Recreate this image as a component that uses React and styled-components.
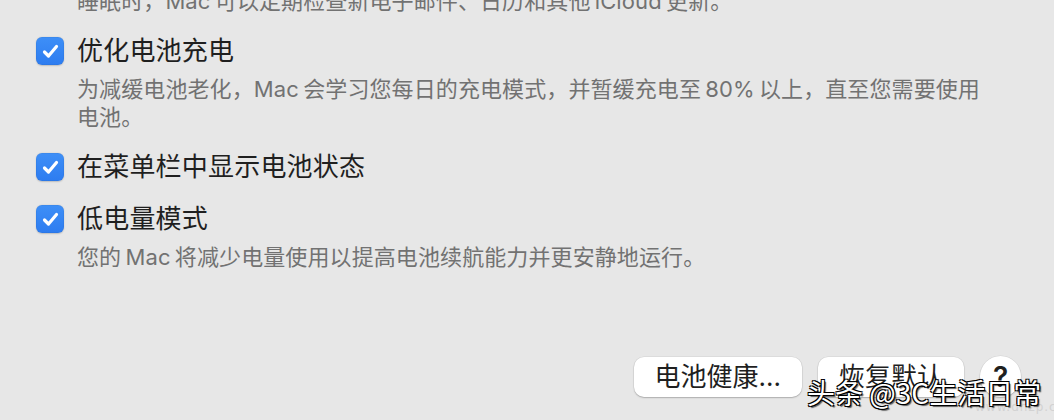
import React from "react";
import styled, { createGlobalStyle } from "styled-components";

const Global = createGlobalStyle`
  html, body { margin: 0; padding: 0; background: #e7e7e7; }
  body { font-family: "Inter", "Noto Sans CJK SC", sans-serif; -webkit-font-smoothing: antialiased; }
`;

const Page = styled.div`
  position: relative;
  width: 1054px;
  height: 420px;
  overflow: hidden;
  background: #e7e7e7;
  display: flex;
  flex-direction: column;
`;

const List = styled.div`
  display: flex;
  flex-direction: column;
  gap: 20px;
  padding-left: 36px;
  margin-top: -13px;
`;

const Row = styled.div`
  display: grid;
  grid-template-columns: 27px 1fr;
  column-gap: 14px;
  align-items: start;
`;

const Box = styled.span`
  width: 28px;
  height: 28px;
  margin-top: 2px;
  border-radius: 6px;
  background: linear-gradient(#3e8ff7, #2d7cf0);
  box-shadow: 0 0.5px 1.5px rgba(0, 0, 0, 0.18), inset 0 0 0 0.5px rgba(0, 0, 0, 0.08);
  display: flex;
  align-items: center;
  justify-content: center;
`;

const Texts = styled.div`
  grid-column: 2;
  display: flex;
  flex-direction: column;
  gap: 8px;
`;

const Title = styled.div`
  font-size: 26px;
  line-height: 32px;
  color: #1f1f1f;
  letter-spacing: 0.2px;
`;

const Desc = styled.div`
  font-size: 22px;
  line-height: 28px;
  color: #727272;
  white-space: nowrap;
  letter-spacing: 0.1px;
  word-spacing: -2px;
`;

const Spacer = styled.div`
  flex: 1;
`;

const Footer = styled.div`
  display: flex;
  justify-content: flex-end;
  align-items: center;
  gap: 16px;
  padding: 0 33px 23px 0;
`;

const Button = styled.button`
  height: 40px;
  padding: 0 21px;
  border: none;
  border-radius: 10px;
  background: #ffffff;
  box-shadow: 0 1px 1.5px rgba(0, 0, 0, 0.22), 0 0 0 0.5px rgba(0, 0, 0, 0.08);
  font-family: "Inter", "Noto Sans CJK SC", sans-serif;
  font-size: 26px;
  line-height: 40px;
  color: #1f1f1f;
`;

const Help = styled(Button)`
  width: 41px;
  height: 41px;
  padding: 0;
  border-radius: 50%;
  font-weight: 600;
  font-size: 28px;
`;

const Watermark = styled.div`
  position: absolute;
  left: 807px;
  top: 374px;
  font-family: "Noto Sans CJK SC", sans-serif;
  font-size: 28px;
  line-height: 36px;
  color: #ffffff;
  white-space: nowrap;
  text-shadow: 1px 1px 0 #000, -1px -1px 0 #000, 1px -1px 0 #000, -1px 1px 0 #000, 2px 2px 1px rgba(0,0,0,0.6);
`;

const SiteMark = styled.div`
  position: absolute;
  left: 975px;
  top: 400px;
  font-family: "DejaVu Sans", sans-serif;
  font-size: 12px;
  letter-spacing: 1px;
  color: #d2d2d2;
`;

const Check = () => (
  <svg width="19" height="19" viewBox="0 0 19 19">
    <path d="M3.5 10 L7.5 14 L15.5 4.5" fill="none" stroke="#fff" strokeWidth="3.2" strokeLinecap="round" strokeLinejoin="round" />
  </svg>
);

const Option = ({ title, lines }) => (
  <Row>
    <Box><Check /></Box>
    <Texts>
      <Title>{title}</Title>
      {lines && (
        <div>
          {lines.map((l, i) => (
            <Desc key={i}>{l}</Desc>
          ))}
        </div>
      )}
    </Texts>
  </Row>
);

export default function App() {
  return (
    <Page>
      <Global />
      <List>
        <Row>
          <Texts>
            <Desc>睡眠时，Mac 可以定期检查新电子邮件、日历和其他 iCloud 更新。</Desc>
          </Texts>
        </Row>
        <Option
          title="优化电池充电"
          lines={[
            "为减缓电池老化，Mac 会学习您每日的充电模式，并暂缓充电至 80% 以上，直至您需要使用",
            "电池。",
          ]}
        />
        <Option title="在菜单栏中显示电池状态" />
        <Option title="低电量模式" lines={["您的 Mac 将减少电量使用以提高电池续航能力并更安静地运行。"]} />
      </List>
      <Spacer />
      <Footer>
        <Button>电池健康...</Button>
        <Button>恢复默认</Button>
        <Help>?</Help>
      </Footer>
      <SiteMark>www.dnzp.com</SiteMark>
      <Watermark>头条 @3C生活日常</Watermark>
    </Page>
  );
}
